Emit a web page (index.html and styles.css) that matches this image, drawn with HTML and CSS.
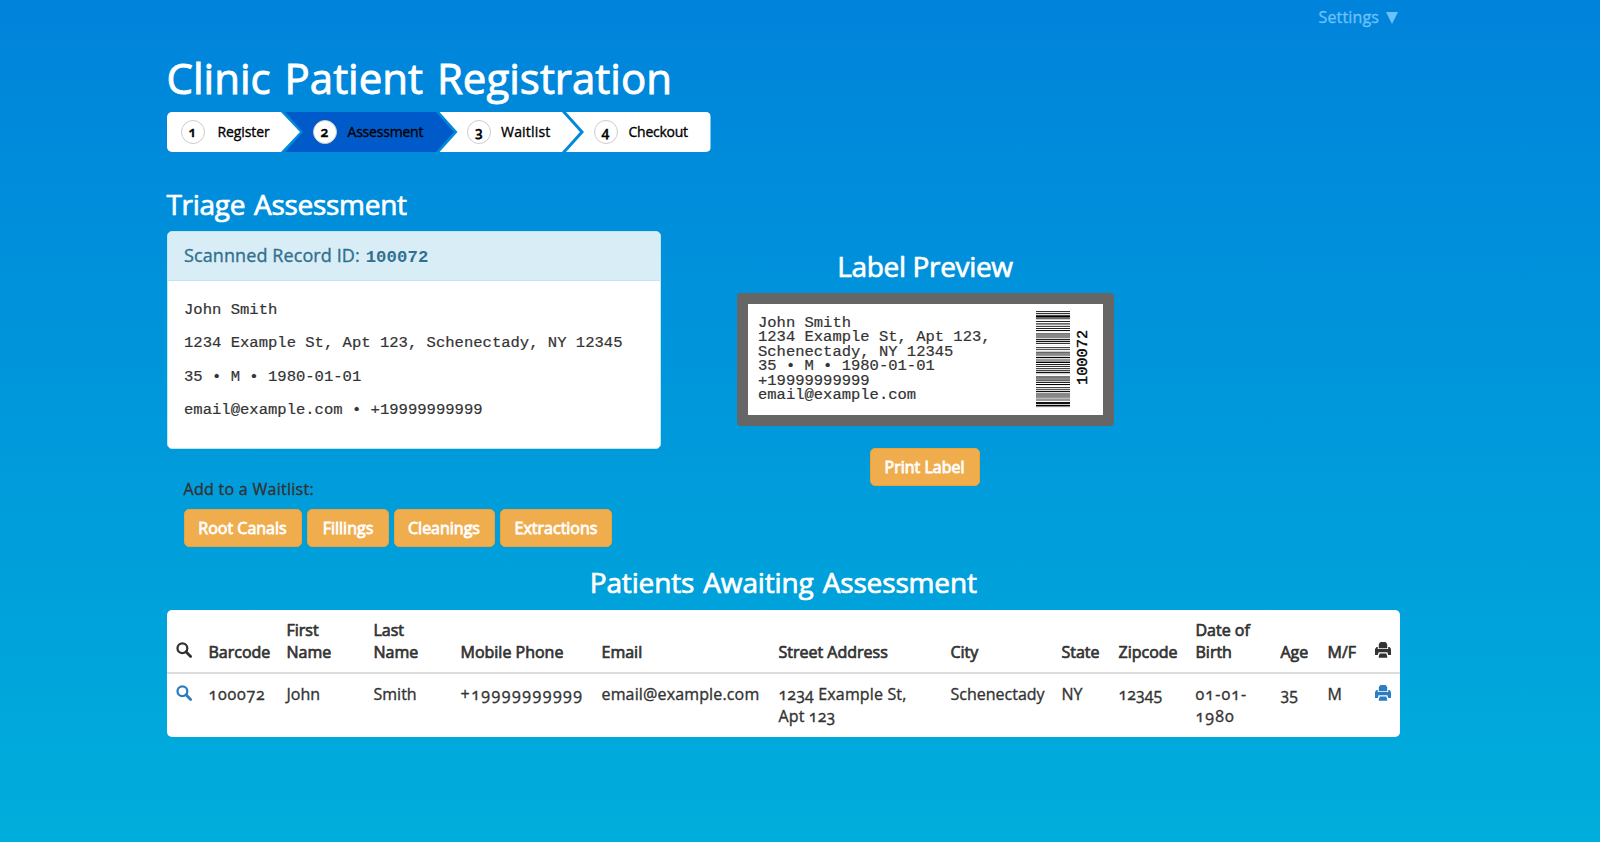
FILE: index.html
```html
<!DOCTYPE html>
<html lang="en">
<head>
<meta charset="utf-8">
<title>Clinic Patient Registration</title>
<link rel="stylesheet" href="styles.css">
</head>
<body>
<svg width="0" height="0" class="defs">
  <symbol id="search" viewBox="0 0 16 16"><circle cx="6.4" cy="6.2" r="4.9" fill="none" stroke="currentColor" stroke-width="2.3"/><path d="M10 9.8l4.6 4.6" stroke="currentColor" stroke-width="2.8" stroke-linecap="round"/></symbol>
  <symbol id="print" viewBox="0 0 16 16"><path fill="currentColor" d="M5.500 0h5l1.700 2v4.200H3.800V2zM1.500 5h1.300v2h10.400V5h1.300L16 7v6h-2.800l-.8-2.800H3.600L2.800 13H0V7zM4.700 11.500h6.600l.9 2.700v1.600H3.800v-1.600z"/></symbol>
</svg>
<div class="container">
  <nav class="topnav"><a class="settings">Settings <i class="caret"></i></a></nav>
  <h1>Clinic Patient Registration</h1>
  <ol class="wizard">
    <li class="step s1"><b class="num">1</b>Register</li>
    <li class="step s2 active"><b class="num">2</b>Assessment</li>
    <li class="step s3"><b class="num">3</b>Waitlist</li>
    <li class="step s4"><b class="num">4</b>Checkout</li>
  </ol>
  <main class="columns">
    <section class="record">
      <h2 class="triage">Triage Assessment</h2>
      <div class="panel">
        <div class="panel-head">Scannned Record ID: <b>100072</b></div>
        <div class="panel-body">
          <p>John Smith</p>
          <p>1234 Example St, Apt 123, Schenectady, NY 12345</p>
          <p>35 • M • 1980-01-01</p>
          <p>email@example.com • +19999999999</p>
        </div>
      </div>
      <div class="waitlist">
        <p>Add to a Waitlist:</p>
        <div class="buttons">
          <button class="btn w1">Root Canals</button><button class="btn w2">Fillings</button><button class="btn w3">Cleanings</button><button class="btn w4">Extractions</button>
        </div>
      </div>
    </section>
    <section class="preview">
      <h2 class="preview-title">Label Preview</h2>
      <div class="label">
        <div class="label-text">John Smith<br>1234 Example St, Apt 123,<br>Schenectady, NY 12345<br>35 • M • 1980-01-01<br>+19999999999<br>email@example.com</div>
        <svg class="barcode" id="barcode" width="34" height="97" viewBox="0 0 34 97" shape-rendering="crispEdges"></svg>
        <div class="code">100072</div>
      </div>
      <button class="btn print">Print Label</button>
    </section>
  </main>
  <h2 class="awaiting">Patients Awaiting Assessment</h2>
  <div class="table-box">
    <table>
      <colgroup><col class="c1"><col class="c2"><col class="c3"><col class="c3"><col class="c5"><col class="c6"><col class="c7"><col class="c8"><col class="c9"><col class="c10"><col class="c11"><col class="c12"><col class="c12"><col></colgroup>
      <thead><tr>
        <th><svg class="icon"><use href="#search"/></svg></th><th>Barcode</th><th>First<br>Name</th><th>Last<br>Name</th><th>Mobile Phone</th><th>Email</th><th>Street Address</th><th>City</th><th>State</th><th>Zipcode</th><th>Date of<br>Birth</th><th>Age</th><th>M/F</th><th><svg class="icon"><use href="#print"/></svg></th>
      </tr></thead>
      <tbody><tr>
        <td><svg class="icon link"><use href="#search"/></svg></td><td class="wide">100072</td><td>John</td><td>Smith</td><td class="phone">+19999999999</td><td class="email">email@example.com</td><td class="email">1234 Example St,<br>Apt 123</td><td>Schenectady</td><td>NY</td><td>12345</td><td class="dob">01-01-<br>1980</td><td>35</td><td>M</td><td><svg class="icon link"><use href="#print"/></svg></td>
      </tr></tbody>
    </table>
  </div>
</div>
<script src="barcode.js"></script>
</body>
</html>
```

FILE: styles.css
```css
* { box-sizing: border-box; }
html { height: 100%; }
body {
  margin: 0;
  height: 100%;
  overflow: hidden;
  background: linear-gradient(#0083db, #00aedb);
  font: 16px/22px "Open Sans", "Noto Sans", sans-serif;
  font-variant-numeric: oldstyle-nums;
  color: #333;
  -webkit-text-stroke: 0.35px;
}
p, h1, h2, ol { margin: 0; padding: 0; }
.defs { position: absolute; }
.container { width: 1233.5px; margin-left: 166.5px; padding-top: 6px; }

.topnav { display: flex; justify-content: flex-end; height: 48px; }
.settings { display: flex; gap: 7px; padding-right: 2px; line-height: 23px; color: #6ac1fb; letter-spacing: .15px; }
.caret { width: 12px; height: 12px; margin-top: 6px; background: currentColor; clip-path: polygon(0 0, 100% 0, 50% 100%); }

h1 { font-size: 42px; line-height: 47px; margin-bottom: -1px; font-weight: 400; color: #fff; letter-spacing: 0; word-spacing: 3px; -webkit-text-stroke: .9px; }
h2 { font-size: 28px; line-height: 30px; font-weight: 400; color: #fff; -webkit-text-stroke: .7px; }

.wizard { display: flex; width: 544.5px; height: 40px; margin-top: 12px; border-radius: 5px; overflow: hidden; list-style: none; }
.step {
  display: flex; align-items: center; gap: 11px; padding-left: 27.5px;
  background: #fff; color: #000; font-size: 14px; line-height: 20px; white-space: nowrap;
  clip-path: polygon(0 0, calc(100% - 18px) 0, 100% 50%, calc(100% - 18px) 100%, 0 100%, 18px 50%);
}
.s1 { width: 133.5px; padding-left: 14px; gap: 13px; clip-path: polygon(0 0, calc(100% - 19px) 0, 100% 50%, calc(100% - 19px) 100%, 0 100%); letter-spacing: -.1px; }
.s2 { width: 169px; margin-left: -15px; letter-spacing: -.2px; }
.s3 { width: 140.5px; margin-left: -14.5px; gap: 10px; letter-spacing: .2px; }
.s4 { width: 144.5px; margin-left: -14px; clip-path: polygon(0 0, 100% 0, 100% 100%, 0 100%, 18px 50%); letter-spacing: -.25px; }
.active { background: #005ac9; }
.num { width: 24px; height: 24px; border: 1px solid #ccc; border-radius: 50%; background: #fff; line-height: 22px; text-align: center; font-weight: 600; letter-spacing: 0; }

.columns { display: flex; height: 415px; }
.record { width: 494.5px; margin-top: 36.5px; }
.triage { letter-spacing: -.3px; word-spacing: 2px; }
.panel { margin-top: 12.5px; height: 218px; border: 1px solid #bce8f1; border-radius: 5px; background: #fff; overflow: hidden; }
.panel-head { height: 49px; padding: 13px 16.5px 0; border-bottom: 1px solid #bce8f1; background: #d9edf7; color: #31708f; font-size: 18px; line-height: 20px; letter-spacing: .1px; }
.panel-head b { margin-left: 1px; font-family: "Liberation Mono", monospace; font-size: 17.3px; -webkit-text-stroke: 0; }
.panel-body { padding: 13px 16.5px; font: 15.55px/33.4px "Liberation Mono", monospace; -webkit-text-stroke: .2px; }
.waitlist { padding: 30px 0 0 17px; }
.waitlist p { letter-spacing: .28px; line-height: 21px; margin-bottom: 1px; }
.buttons { display: flex; margin-top: 9px; }
.btn { height: 38px; padding: 0 0 1px; border: 1px solid #eea236; border-radius: 5px; background: #f0ad4e; color: #fff; font: 16px/22px "Open Sans", sans-serif; -webkit-text-stroke: .8px; }
.w1 { width: 118px; }
.w2 { width: 82px; margin-left: 5.500px; }
.w3 { width: 101px; margin-left: 4.500px; }
.w4 { width: 112px; margin-left: 5.500px; }

.preview { display: flex; flex-direction: column; align-items: center; width: 377px; margin: 98.500px 0 0 75.500px; }
.preview-title { letter-spacing: -.35px; }
.label { display: flex; width: 377px; height: 133px; margin: 12px 0 22.500px; border: 11px solid #666; border-radius: 4px; background: #fff; }
.label-text { width: 288.500px; padding: 12.500px 0 0 10.500px; font: 15.500px/14.450px "Liberation Mono", monospace; -webkit-text-stroke: .2px; }
.barcode { margin-top: 7px; flex: none; }
.code { width: 20px; margin: 0 0 5px 3px; font: 15.300px/20px "Liberation Mono", monospace; color: #000; writing-mode: vertical-rl; transform: rotate(180deg); text-align: center; }
.print { width: 110px; margin-right: 1px; }

.awaiting { text-align: center; letter-spacing: -.15px; word-spacing: 2px; }
.table-box { height: 126.500px; margin-top: 13px; border-radius: 5px; background: #fff; overflow: hidden; }
table { width: 100%; table-layout: fixed; border-collapse: collapse; }
th, td { padding: 9px 0 9px 9px; text-align: left; font-weight: 400; white-space: nowrap; }
th { vertical-align: bottom; border-bottom: 2px solid #ddd; -webkit-text-stroke: .7px; }
td { vertical-align: top; }
.c1 { width: 33px; } .c2 { width: 78px; } .c3 { width: 87px; } .c5 { width: 141px; }
.c6 { width: 177px; } .c7 { width: 172px; } .c8 { width: 111px; } .c9 { width: 57px; }
.c10 { width: 77px; } .c11 { width: 85px; } .c12 { width: 47px; }
.email { letter-spacing: .15px; }
.wide { letter-spacing: .8px; }
.dob { letter-spacing: 1.100px; }
.phone { letter-spacing: 1.500px; }
.icon { display: block; width: 16px; height: 16px; margin: 2px 0 5px; }
.link { color: #2d7dc4; }
```

FILE: barcode.js
```js
// One hex grey level per row, top to bottom
const rows = '3e3d4066cf2f69d4f2f1ef78888d2c1d3fef4d5ec6889d0d9990f2e3f4d4c1cef77886c2f0ef4d5d1d88889b99f12e0c4821908e9';
document.getElementById('barcode').innerHTML = [...rows.slice(0, 92) + '1c08e'].map((c, y) =>
  `<rect y="${y}" width="34" height="1" fill="#${c}${c}${c}"/>`).join('');
```
